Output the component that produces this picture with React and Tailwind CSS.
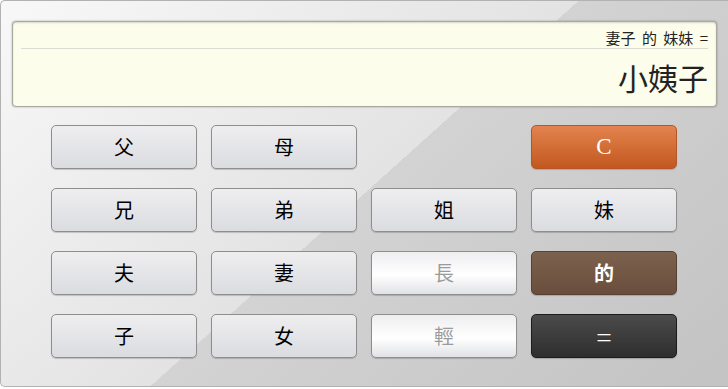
import React from 'react';

const cjk = { fontFamily: '"Noto Sans CJK TC", "Noto Sans CJK SC", sans-serif' };

const keys = [
  { label: '父' }, { label: '母' }, null, { label: 'C', kind: 'clear' },
  { label: '兄' }, { label: '弟' }, { label: '姐' }, { label: '妹' },
  { label: '夫' }, { label: '妻' }, { label: '長', kind: 'light' }, { label: '的', kind: 'of' },
  { label: '子' }, { label: '女' }, { label: '輕', kind: 'light' }, { label: '=', kind: 'equals' },
];

const kindClass = {
  normal: 'bg-[linear-gradient(#eeeef0,#dbdce0)] border-[#8e8e8e] text-black text-[20px]',
  light: 'bg-[linear-gradient(#eeeef1,#ffffff_55%,#e1e2e6)] border-[#8e8e8e] text-[#9b9b9b] text-[20px]',
  clear: 'bg-[linear-gradient(#e3834f,#c2581f)] border-[#b55628] text-white text-[23px]',
  of: 'bg-[linear-gradient(#7c614d,#694e3e)] border-[#574234] text-white font-bold text-[20px]',
  equals: 'bg-[linear-gradient(#4b4b4b,#2e2e2e)] border-[#1c1c1c] text-white text-[28px] font-light',
};

const Key = ({ k }) => {
  if (!k) return <div />;
  const kind = k.kind || 'normal';
  const isC = kind === 'clear';
  return (
    <button
      type="button"
      className={`h-[44px] rounded-[5px] border flex items-center justify-center shadow-[0_1px_1px_rgba(0,0,0,0.18)] ${kindClass[kind]}`}
      style={isC ? { fontFamily: '"Liberation Serif", serif' } : cjk}
    >
      {k.label}
    </button>
  );
};

export default function App() {
  return (
    <div className="w-[728px] h-[387px] border-l border-t border-b border-[#b2b2b2] rounded-l-[5px] bg-[linear-gradient(138deg,#f8f8f8_0%,#e3e3e3_50%,#d3d3d3_50%,#c3c3c3_100%)] pt-[20px] px-[11px]" style={cjk}>
      <div className="h-[86px] rounded-[4px] border border-[#a9a9a0] bg-[#fcfdea] shadow-[0_0_2px_rgba(0,0,0,0.35),inset_0_1px_2px_rgba(0,0,0,0.15)] px-[8px] pt-[5px]">
        <div className="h-[22px] leading-[21px] text-[15px] text-right text-[#222] border-b border-[#dcdcd4] [word-spacing:3px]">妻子 的 妹妹 =</div>
        <div className="pt-[10px] leading-[36px] text-[30px] text-right text-[#222]">小姨子</div>
      </div>
      <div className="mt-[18px] w-[626px] ml-[39px] grid grid-cols-4 gap-x-[14px] gap-y-[19px]">
        {keys.map((k, i) => <Key key={i} k={k} />)}
      </div>
    </div>
  );
}
